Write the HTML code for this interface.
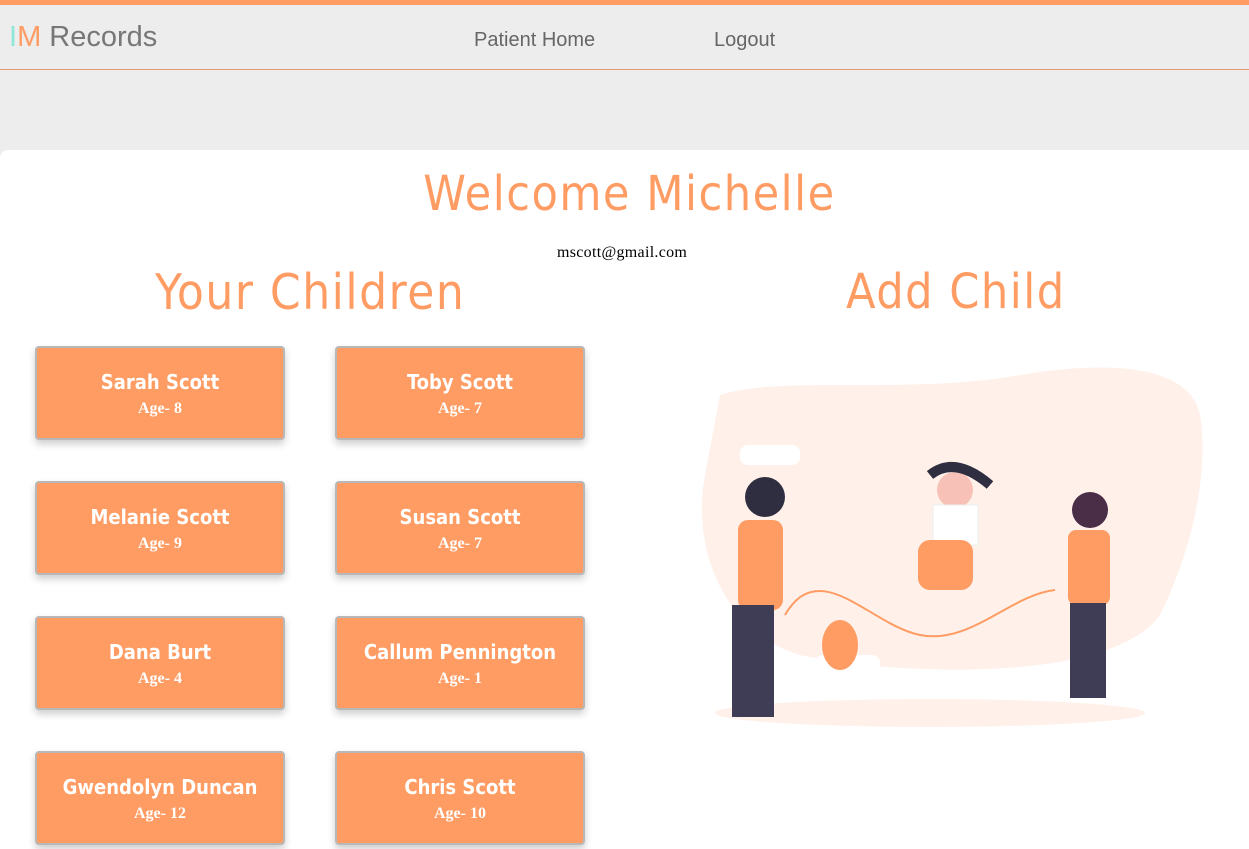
<!DOCTYPE html>
<html><head><style>
body{margin:0;width:1249px;height:849px;overflow:hidden;background:#ededed;font-family:"Liberation Sans",sans-serif;position:relative}
.top{position:absolute;left:0;top:0;width:1249px;height:5px;background:#ff9c63}
.line{position:absolute;left:0;top:69px;width:1249px;height:1px;background:#e59a72}
.logo{position:absolute;left:9px;top:21px;font-size:29px;color:#777}
.nav{position:absolute;top:29px;font-size:20px;color:#666}
.main{position:absolute;left:0;top:150px;width:1249px;height:699px;background:#fff;border-radius:8px 0 0 0}
h1,h2{position:absolute;margin:0;font-weight:normal;color:#ff9c63;font-family:"DejaVu Sans Condensed","Liberation Sans",sans-serif;letter-spacing:1.5px}
.card{position:absolute;width:246px;height:90px;background:#ff9c63;border:2px solid #b8b8b8;border-radius:4px;box-shadow:0 4px 8px rgba(0,0,0,.2);color:#fff;text-align:center}
.card b{display:block;font-weight:bold;font-size:20px;margin-top:22px;font-family:"DejaVu Sans Condensed",sans-serif}
.card i{display:block;font-style:normal;font-weight:bold;font-size:16px;margin-top:6px;font-family:"Liberation Serif",serif}
</style></head><body>
<div class="top"></div>
<div class="logo"><span style="color:#8ee8d8">I</span><span style="color:#ff9c63">M</span> Records</div>
<div class="nav" style="left:474px">Patient Home</div>
<div class="nav" style="left:714px">Logout</div>
<div class="line"></div>
<div class="main">
<h1 style="left:0;width:1259px;text-align:center;top:16px;font-size:48px">Welcome Michelle</h1>
<div style="position:absolute;left:557px;top:94px;font-family:'Liberation Serif',serif;font-size:16px;letter-spacing:.3px">mscott@gmail.com</div>
<h2 style="left:155px;top:114px;font-size:49px">Your Children</h2>
<h2 style="left:846px;top:114px;font-size:48px">Add Child</h2>
<div class="card" style="left:35px;top:196px"><b>Sarah Scott</b><i>Age- 8</i></div>
<div class="card" style="left:335px;top:196px"><b>Toby Scott</b><i>Age- 7</i></div>
<div class="card" style="left:35px;top:331px"><b>Melanie Scott</b><i>Age- 9</i></div>
<div class="card" style="left:335px;top:331px"><b>Susan Scott</b><i>Age- 7</i></div>
<div class="card" style="left:35px;top:466px"><b>Dana Burt</b><i>Age- 4</i></div>
<div class="card" style="left:335px;top:466px"><b>Callum Pennington</b><i>Age- 1</i></div>
<div class="card" style="left:35px;top:601px"><b>Gwendolyn Duncan</b><i>Age- 12</i></div>
<div class="card" style="left:335px;top:601px"><b>Chris Scott</b><i>Age- 10</i></div>
<svg style="position:absolute;left:690px;top:205px" width="520" height="380" viewBox="0 0 520 380">
<path d="M30 40 C90 20 220 40 330 20 C420 5 500 10 510 60 C520 120 500 200 470 260 C420 330 200 320 110 300 C40 280 0 200 15 120 Z" fill="#fff1ea"/>
<rect x="50" y="90" width="60" height="20" rx="8" fill="#fff"/>
<rect x="125" y="300" width="65" height="18" rx="8" fill="#fff"/>
<ellipse cx="240" cy="358" rx="215" ry="14" fill="#fff1ea"/>
<path d="M95 260 C130 200 180 270 230 280 C280 290 320 240 365 235" fill="none" stroke="#ff9c63" stroke-width="2"/>
<circle cx="75" cy="142" r="20" fill="#2f2e41"/>
<rect x="48" y="165" width="45" height="90" rx="10" fill="#ff9c63"/>
<rect x="42" y="250" width="42" height="112" fill="#3f3d56"/>
<circle cx="265" cy="135" r="18" fill="#f7c1b8"/>
<path d="M240 120 Q265 100 300 130" stroke="#2f2e41" stroke-width="10" fill="none"/>
<rect x="243" y="150" width="45" height="40" fill="#fff" stroke="#eee"/>
<rect x="228" y="185" width="55" height="50" rx="12" fill="#ff9c63"/>
<circle cx="400" cy="155" r="18" fill="#4a2e48"/>
<rect x="378" y="175" width="42" height="75" rx="8" fill="#ff9c63"/>
<rect x="380" y="248" width="36" height="95" fill="#3f3d56"/>
<ellipse cx="150" cy="290" rx="18" ry="25" fill="#ff9c63"/>
</svg>
</div>
</body></html>
